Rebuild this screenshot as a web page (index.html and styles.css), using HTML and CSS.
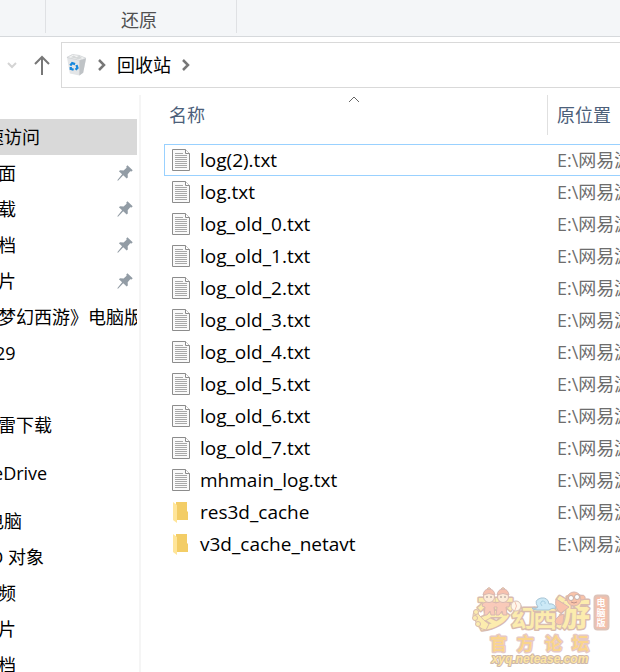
FILE: index.html
```
<!DOCTYPE html>
<html lang="zh-CN">
<head>
    <meta charset="UTF-8">
    <title>回收站</title>
    <link rel="stylesheet" href="styles.css">
</head>
<body>
    <svg class="sprite" aria-hidden="true">
        <symbol id="icon-pin" viewBox="0 0 16 16">
            <path fill="#929ca5" d="M10.4 0.3 15.7 5.2 14.6 6.4 13.2 6.2 10.7 9.2 10.8 12.4 9.7 13.5 6.2 10.3 1 15.7 0.3 15.2 5.1 9.3 1.9 6.3 3.1 5.2 6.6 5.4 9.6 2.8 9.3 1.4z"/>
        </symbol>
        <symbol id="icon-text" viewBox="0 0 18 22">
            <path fill="#fafafa" stroke="#8c8c8c" d="M.5.5h13l4 4v17H.5z"/>
            <path fill="#fff" stroke="#8c8c8c" d="M13.500.5v4h4"/>
            <path stroke="#a8a8a8" d="M3 4.500h8M3 6.500h12M3 8.500h12M3 10.500h12M3 12.500h12M3 14.500h12M3 16.500h12M3 18.500h12"/>
        </symbol>
        <symbol id="icon-folder" viewBox="0 0 18 22">
            <path fill="#f3cd66" d="M4 1h11v9l1 1v8H4z"/>
            <path fill="#ffe599" d="M1 1 5 4v18l-4-3z"/>
        </symbol>
        <symbol id="icon-chevron" viewBox="0 0 8 12">
            <path d="M1 1l5 5-5 5" fill="none" stroke="#777" stroke-width="2.500"/>
        </symbol>
    </svg>

    <div class="ribbon">
        <div class="ribbon-group"></div>
        <div class="ribbon-group ribbon-restore">还原</div>
    </div>

    <div class="address-row">
        <button class="nav-button recent" aria-label="最近浏览的位置">
            <svg width="10" height="8" viewBox="0 0 10 8"><path d="M1 2l4 4 4-4" fill="none" stroke="#d4d4d4" stroke-width="2"/></svg>
        </button>
        <button class="nav-button up" aria-label="向上">
            <svg width="16" height="20" viewBox="0 0 16 20"><path d="M8 20V2M1 9l7-7 7 7" fill="none" stroke="#777" stroke-width="2"/></svg>
        </button>
        <div class="address-bar">
            <svg class="bin" width="21" height="24" viewBox="0 0 22 24">
                <path d="M1 4 4 21l10 2 4-3 3-15-7-3-8-1z" fill="#e3e5e7"/>
                <path d="M14 7l7-2-3 15-4 3z" fill="#bfc3c6"/>
                <path d="M1 4l6-3 7 1 7 3-7 2z" fill="#f4f5f5" stroke="#cbced0" stroke-width=".7"/>
                <path d="M5 4l3-2 3 2 3-2 3 3-4 1z" fill="#d5d8d9"/>
                <path d="M4.500 12.500l2-2.500 3 1M11 12l1 3-2 2M8 17l-3-1v-2" fill="none" stroke="#1687dd" stroke-width="2.400"/>
            </svg>
            <svg class="chevron"><use href="#icon-chevron"/></svg>
            <button class="crumb">回收站</button>
            <svg class="chevron"><use href="#icon-chevron"/></svg>
        </div>
    </div>

    <div class="content">
        <nav class="sidebar">
            <ul class="tree">
                <li class="root selected"><a href="#">快速访问</a></li>
                <li><a href="#">桌面</a><svg class="pin"><use href="#icon-pin"/></svg></li>
                <li><a href="#">下载</a><svg class="pin"><use href="#icon-pin"/></svg></li>
                <li><a href="#">文档</a><svg class="pin"><use href="#icon-pin"/></svg></li>
                <li><a href="#">图片</a><svg class="pin"><use href="#icon-pin"/></svg></li>
                <li><a href="#">《梦幻西游》电脑版</a></li>
                <li><a href="#">8.29</a></li>
                <li></li>
                <li><a href="#">迅雷下载</a></li>
            </ul>
            <ul class="tree">
                <li class="root"><a href="#">OneDrive</a></li>
            </ul>
            <ul class="tree">
                <li class="root"><a href="#">此电脑</a></li>
                <li><a href="#">3D 对象</a></li>
                <li><a href="#">视频</a></li>
                <li><a href="#">图片</a></li>
                <li><a href="#">文档</a></li>
            </ul>
        </nav>

        <main class="files">
            <table>
                <thead>
                    <tr>
                        <th class="col-name">名称<svg class="sort" width="12" height="7" viewBox="0 0 12 7"><path d="M1 6l5-5 5 5" fill="none" stroke="#666"/></svg></th>
                        <th class="col-location">原位置</th>
                    </tr>
                </thead>
                <tbody>
                    <tr class="focused"><td><div class="file"><svg class="file-icon"><use href="#icon-text"/></svg>log(2).txt</div></td><td>E:\网易游戏</td></tr>
                    <tr><td><div class="file"><svg class="file-icon"><use href="#icon-text"/></svg>log.txt</div></td><td>E:\网易游戏</td></tr>
                    <tr><td><div class="file"><svg class="file-icon"><use href="#icon-text"/></svg>log_old_0.txt</div></td><td>E:\网易游戏</td></tr>
                    <tr><td><div class="file"><svg class="file-icon"><use href="#icon-text"/></svg>log_old_1.txt</div></td><td>E:\网易游戏</td></tr>
                    <tr><td><div class="file"><svg class="file-icon"><use href="#icon-text"/></svg>log_old_2.txt</div></td><td>E:\网易游戏</td></tr>
                    <tr><td><div class="file"><svg class="file-icon"><use href="#icon-text"/></svg>log_old_3.txt</div></td><td>E:\网易游戏</td></tr>
                    <tr><td><div class="file"><svg class="file-icon"><use href="#icon-text"/></svg>log_old_4.txt</div></td><td>E:\网易游戏</td></tr>
                    <tr><td><div class="file"><svg class="file-icon"><use href="#icon-text"/></svg>log_old_5.txt</div></td><td>E:\网易游戏</td></tr>
                    <tr><td><div class="file"><svg class="file-icon"><use href="#icon-text"/></svg>log_old_6.txt</div></td><td>E:\网易游戏</td></tr>
                    <tr><td><div class="file"><svg class="file-icon"><use href="#icon-text"/></svg>log_old_7.txt</div></td><td>E:\网易游戏</td></tr>
                    <tr><td><div class="file"><svg class="file-icon"><use href="#icon-text"/></svg>mhmain_log.txt</div></td><td>E:\网易游戏</td></tr>
                    <tr><td><div class="file"><svg class="file-icon"><use href="#icon-folder"/></svg>res3d_cache</div></td><td>E:\网易游戏</td></tr>
                    <tr><td><div class="file"><svg class="file-icon"><use href="#icon-folder"/></svg>v3d_cache_netavt</div></td><td>E:\网易游戏</td></tr>
                </tbody>
            </table>
        </main>
    </div>

    <svg class="watermark" width="140" height="82" viewBox="0 0 140 82">
        <!-- title -->
        <g class="logo-title">
            <text x="5" y="41" font-size="37">梦</text>
            <text x="39" y="41" font-size="25">幻</text>
            <text x="61" y="41" font-size="24">西</text>
            <text x="83" y="40" font-size="35">游</text>
        </g>
        <!-- claw on the left -->
        <g fill="#fbe58c" stroke="#c9a08c">
            <path d="M3 34q-4-5 0-9 3 0 4 4 5 6 10 9l-3 6Q6 43 3 34z"/>
            <circle cx="4" cy="26" r="2.500"/>
            <circle cx="3" cy="32" r="2.500"/>
            <circle cx="6" cy="38" r="2.500"/>
        </g>
        <!-- twins -->
        <g stroke="#c99a90">
            <path d="M11 17l7-2 6 2 6-2 8 2-1 4-3 0 1 8-4 0-1-4-3 4-3 0 1-8-3 0 1 8-4 0-1-4-3 4-3 0 1-8-3-1z" fill="#f7b49c"/>
            <circle cx="17" cy="11" r="5.500" fill="#fde3c8"/>
            <circle cx="31" cy="11" r="5.500" fill="#fde3c8"/>
            <path d="M11 9q1-6 6-6t6 6q-6-3-12 0zM25 9q1-6 6-6t6 6q-6-3-12 0z" fill="#f4a78c"/>
            <path d="M15 3q2-3 4 0zM29 3q2-3 4 0z" fill="#fbe07e"/>
        </g>
        <g fill="#6b5a58">
            <circle cx="15" cy="11" r=".8"/><circle cx="19" cy="11" r=".8"/>
            <circle cx="29" cy="11" r=".8"/><circle cx="33" cy="11" r=".8"/>
        </g>
        <!-- peach and cloud -->
        <circle cx="44" cy="20" r="5" fill="#fff3e2" stroke="#c9a898"/>
        <path d="M43 16q3 4 0 8" fill="none" stroke="#f0a890"/>
        <path d="M60 22q5 1 6-1-5-7 3-9 7-1 8 6 5-1 7 4-5 0-7 2H65q-4 0-5-2z" fill="#b7e0f3" stroke="#7fabc4"/>
        <path d="M70 20q-3-3 0-5 4 0 3 3" fill="none" stroke="#7fb9d6"/>
        <!-- monkey -->
        <g stroke="#c99a90">
            <path d="M97 21l-13-8q-2 10 5 14z" fill="#f7ab8a"/>
            <path d="M83 36q1-6 9-8l-1 9q-4 4-8-1z" fill="#f7ab8a"/>
            <circle cx="102" cy="13" r="7" fill="#f7ab85"/>
            <path d="M108 10q4-2 5 1t-4 3z" fill="#f7ab85"/>
        </g>
        <g fill="#fff" stroke="#8c706a" stroke-width=".7">
            <circle cx="99" cy="12" r="2.500"/>
            <circle cx="105" cy="11" r="2.500"/>
        </g>
        <path d="M99 16q3 2 6 0" fill="none" stroke="#a5665a"/>
        <!-- edition badge -->
        <rect x="122.500" y="9.500" width="14" height="34" rx="3" fill="#eea488" stroke="#d0ab9c" stroke-width="2"/>
        <g class="logo-badge">
            <text x="129" y="20">电</text>
            <text x="129" y="30">脑</text>
            <text x="129" y="40">版</text>
        </g>
        <text class="logo-forum" x="18 45 73 100" y="64">官方论坛</text>
        <text class="logo-url" x="68" y="77">xyq.netease.com</text>
    </svg>
</body>
</html>
```
FILE: styles.css
```
* {
    box-sizing: border-box;
}

body {
    margin: 0;
    height: 100vh;
    display: flex;
    flex-direction: column;
    position: relative;
    overflow: hidden;
    background: #fff;
    color: #000;
    font: 18px/24px "Open Sans", "Noto Sans CJK SC", sans-serif;
}

ul {
    list-style: none;
    margin: 0;
    padding: 0;
}

a {
    color: inherit;
    text-decoration: none;
}

button {
    padding: 0;
    border: 0;
    background: none;
    color: inherit;
    font: inherit;
}

.sprite {
    display: none;
}

.ribbon {
    flex: none;
    display: flex;
    height: 37px;
    padding-bottom: 3px;
    background: #f4f6f8;
    border-bottom: 1px solid #d6d9dc;
}

.ribbon-group {
    width: 46px;
    border-right: 1px solid #dfe1e4;
}

.ribbon-restore {
    width: 191px;
    padding: 8px 4px 0 0;
    color: #505050;
    text-align: center;
}

.address-row {
    flex: none;
    display: flex;
    align-items: center;
    height: 46px;
    margin-top: 5px;
}

.nav-button {
    display: flex;
    justify-content: center;
}

.recent {
    width: 23px;
}

.up {
    width: 38px;
}

.address-bar {
    flex: 1;
    display: flex;
    align-items: center;
    height: 46px;
    padding-left: 4px;
    border: 1px solid #d9d9d9;
    border-right: 0;
}

.chevron {
    width: 8px;
    height: 12px;
    margin: 0 11px;
}

.content {
    flex: 1;
    display: flex;
    min-height: 0;
    padding-top: 7px;
}

.sidebar {
    flex: none;
    width: 141px;
    padding: 24px 2px 0 0;
    border-right: 2px solid #f5f5f5;
    overflow: hidden;
}

/* the tree is scrolled sideways, its icons are out of view */
.tree {
    margin: 0 0 12px -32px;
    overflow: hidden;
}

.tree li {
    display: flex;
    align-items: center;
    justify-content: space-between;
    height: 36px;
    padding: 0 4px 0 12px;
    white-space: nowrap;
}

.tree .root {
    padding-left: 0;
}

.selected {
    background: #d9d9d9;
}

.pin {
    width: 16px;
    height: 16px;
}

.files {
    flex: 1;
    min-width: 0;
    padding-left: 23px;
    overflow: hidden;
}

/* columns go on past the right edge of the window */
table {
    width: calc(100% + 40px);
    table-layout: fixed;
    border-collapse: separate;
    border-spacing: 0;
}

th {
    height: 40px;
    padding: 0 0 0 5px;
    color: #4c607a;
    font-weight: normal;
    text-align: left;
}

thead::after {
    content: "";
    display: block;
    height: 9px;
}

.col-name {
    position: relative;
    width: 384px;
    border-right: 1px solid #e0e0e0;
}

.col-location {
    padding-left: 9px;
    white-space: nowrap;
}

.sort {
    position: absolute;
    top: 1px;
    left: 50%;
    margin-left: -8px;
}

td {
    height: 32px;
    padding: 0 0 0 8px;
    white-space: nowrap;
}

td:last-child {
    padding-left: 9px;
    color: #6d6d6d;
}

.focused {
    outline: 1px solid #99d1ff;
    outline-offset: -1px;
}

.file {
    display: flex;
    align-items: center;
    gap: 10px;
    font-size: 19px;
}

.file-icon {
    width: 18px;
    height: 22px;
}

.watermark {
    position: absolute;
    right: 8px;
    bottom: 4px;
    opacity: 0.7;
    font-family: "Noto Sans CJK SC", sans-serif;
    font-weight: bold;
}

.logo-title,
.logo-forum,
.logo-url {
    paint-order: stroke;
    stroke-linejoin: round;
}

.logo-title {
    fill: #fbe58c;
    stroke: #c9a08c;
    stroke-width: 3px;
}

.logo-badge {
    fill: #fff;
    font-size: 9px;
    text-anchor: middle;
}

.logo-forum {
    fill: #f9c45c;
    stroke: #dcb3ac;
    stroke-width: 3px;
    font-size: 17px;
}

.logo-url {
    fill: #fbd97c;
    stroke: #b99a86;
    stroke-width: 2px;
    font-family: "Liberation Sans", sans-serif;
    font-size: 12px;
    font-style: italic;
    text-anchor: middle;
}
```
